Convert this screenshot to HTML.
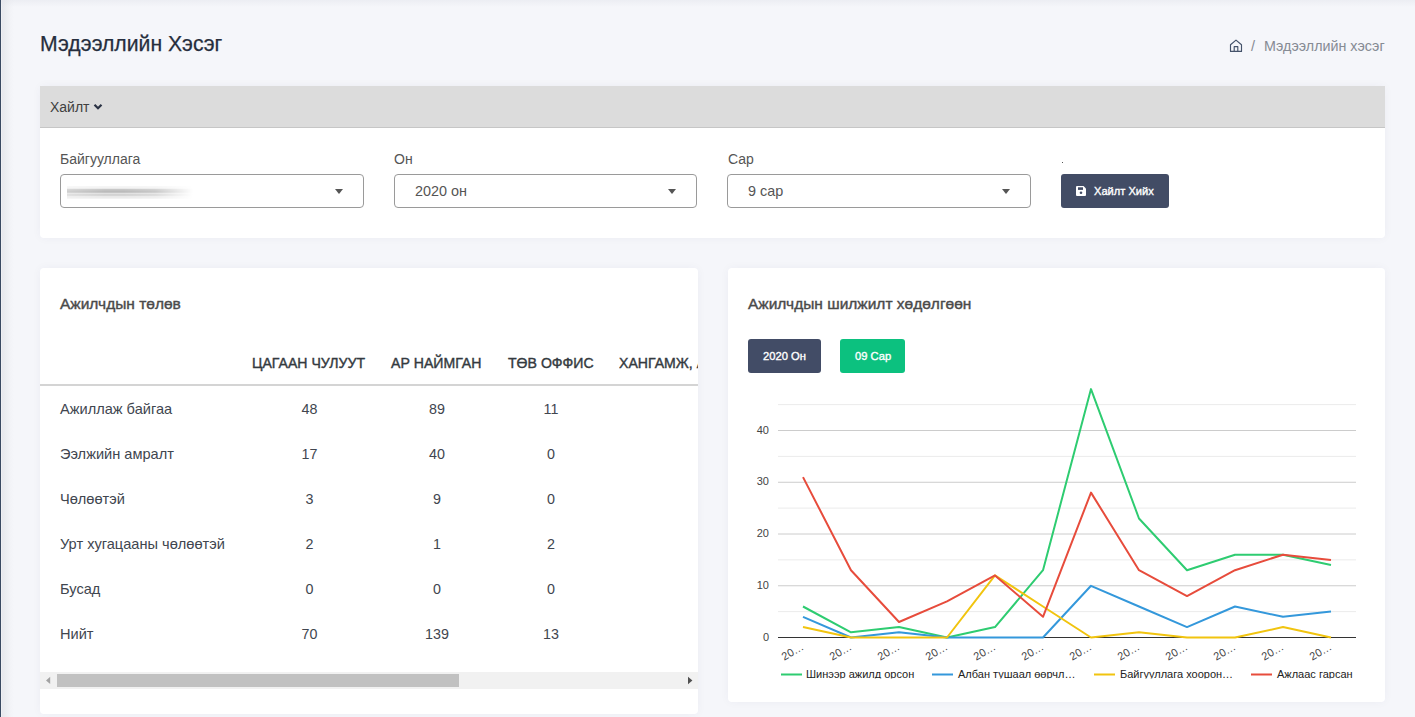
<!DOCTYPE html>
<html><head><meta charset="utf-8">
<style>
*{box-sizing:border-box;margin:0;padding:0}
html,body{width:1415px;height:717px;overflow:hidden}
body{background:#f5f6fa;font-family:"Liberation Sans",sans-serif;color:#343a40;position:relative}
.abs{position:absolute}
#topsh{left:1px;top:0;width:1414px;height:7px;background:linear-gradient(rgba(225,227,234,.45),rgba(245,246,250,0))}
#lb{left:0;top:0;width:1px;height:717px;background:#3a4b63}
#lsh{left:1px;top:0;width:13px;height:717px;background:linear-gradient(90deg,#f3f4f7 0,#e8e9ee 1.5px,#eceef2 5px,#f2f3f7 9px,#f5f6fa 13px)}
#title{left:40px;top:32px;font-size:21.2px;color:#262e3d;white-space:nowrap;-webkit-text-stroke:0.25px #262e3d}
#bc{left:1251px;top:38px;font-size:14.5px;color:#868b94;white-space:nowrap}
.card{background:#fff;border-radius:4px;box-shadow:0 0 10px rgba(40,50,90,0.045)}
#search{left:40px;top:86px;width:1345px;height:152px}
#shead{left:0;top:0;width:1345px;height:42px;background:#dcdcdc;border-bottom:1px solid #c6c6c6}
#shead span{position:absolute;left:10px;top:13px;font-size:14px;color:#404040}
.lbl{font-size:14px;color:#555;white-space:nowrap}
.sel{height:34px;border:1px solid #9a9a9a;border-radius:4px;background:#fff}
.sel .v{position:absolute;left:20px;top:8px;font-size:14.4px;color:#555;white-space:nowrap}
.sel .ar{position:absolute;width:0;height:0;border-left:4px solid transparent;border-right:4px solid transparent;border-top:5px solid #555;top:14px}
#btn{left:1061px;top:174px;width:108px;height:34px;background:#424c65;border-radius:3px;color:#fff}
#btn span{position:absolute;left:33px;top:11px;font-size:11.1px;white-space:nowrap;-webkit-text-stroke:0.35px #fff}
#lcard{left:40px;top:268px;width:658px;height:446px}
#rcard{left:728px;top:268px;width:657px;height:434px}
.ct{font-size:15.5px;color:#4a4a4a;white-space:nowrap;-webkit-text-stroke:0.4px #4a4a4a}
.th{font-size:14.1px;color:#343a40;white-space:nowrap;top:355px;-webkit-text-stroke:0.4px #343a40}
.rl{font-size:14.6px;color:#41464f;white-space:nowrap;left:60px}
.num{font-size:14.3px;color:#41464f;white-space:nowrap;text-align:center;width:60px}
.cb{top:339px;height:34px;border-radius:3px;color:#fff;font-size:11.2px}
.cb span{position:absolute;top:11px;white-space:nowrap;-webkit-text-stroke:0.35px #fff}
svg text{font-family:"Liberation Sans",sans-serif}
</style></head><body>
<div id="lsh" class="abs"></div>
<div id="topsh" class="abs"></div>
<div id="lb" class="abs"></div>
<div id="title" class="abs">Мэдээллийн Хэсэг</div>
<svg class="abs" style="left:1229px;top:39px" width="14" height="14" viewBox="0 0 14 14"><path d="M1.5 5.8 L7 1.1 L12.5 5.8 V12.4 H1.5 Z M5.2 12.4 V7.6 H8.8 V12.4" fill="none" stroke="#44526a" stroke-width="1.15" stroke-linejoin="round"/></svg>
<div id="bc" class="abs">/</div><div class="abs" style="left:1264px;top:38px;font-size:14.3px;color:#868b94;white-space:nowrap">Мэдээллийн хэсэг</div>

<div id="search" class="abs card">
  <div id="shead" class="abs"><span>Хайлт</span>
  <svg class="abs" style="left:53px;top:17px" width="10" height="8" viewBox="0 0 10 8"><path d="M1.5 1.8 L5 5.3 L8.5 1.8" fill="none" stroke="#2b3345" stroke-width="2.2"/></svg></div>
</div>
<div class="abs lbl" style="left:60px;top:151px">Байгууллага</div>
<div class="abs lbl" style="left:394px;top:151px">Он</div>
<div class="abs lbl" style="left:728px;top:151px">Сар</div>
<div class="abs" style="left:1062px;top:162px;width:1.3px;height:1.3px;background:#555"></div>
<div class="abs sel" style="left:60px;top:174px;width:304px">
  <div class="abs" style="left:6px;top:11px;width:126px;height:13px;background:linear-gradient(180deg,rgba(0,0,0,0) 0,rgba(0,0,0,.08) 1px,rgba(0,0,0,.02) 2px,rgba(0,0,0,.22) 3.5px,rgba(0,0,0,.28) 6px,rgba(0,0,0,.12) 7.5px,rgba(0,0,0,.2) 9px,rgba(0,0,0,.05) 11px,rgba(0,0,0,.1) 12px,rgba(0,0,0,0) 13px);-webkit-mask-image:linear-gradient(90deg,rgba(0,0,0,.7),#000 30%,#000 45%,rgba(0,0,0,.8) 70%,rgba(0,0,0,0))"></div>
  <div class="ar" style="left:274px"></div></div>
<div class="abs sel" style="left:394px;top:174px;width:303px"><div class="v">2020 он</div><div class="ar" style="left:273px"></div></div>
<div class="abs sel" style="left:727px;top:174px;width:304px"><div class="v">9 сар</div><div class="ar" style="left:274px"></div></div>
<div id="btn" class="abs">
  <svg class="abs" style="left:15px;top:12px" width="10" height="10" viewBox="0 0 10 10"><path d="M0 1 Q0 0 1 0 H7.5 L10 2.5 V9 Q10 10 9 10 H1 Q0 10 0 9 Z" fill="#fff"/><rect x="2" y="1.3" width="5" height="2.6" fill="#424c65"/><circle cx="5" cy="6.8" r="1.3" fill="#424c65"/></svg>
  <span>Хайлт Хийх</span></div>

<div id="lcard" class="abs card"></div>
<div class="abs ct" style="left:60px;top:295px">Ажилчдын төлөв</div>
<div class="abs th" style="left:252px">ЦАГААН ЧУЛУУТ</div>
<div class="abs th" style="left:391px">АР НАЙМГАН</div>
<div class="abs th" style="left:508px">ТӨВ ОФФИС</div>
<div class="abs" style="left:619px;top:355px;width:79px;height:20px;overflow:hidden"><div class="th" style="position:relative;top:0">ХАНГАМЖ, АЖ</div></div>
<div class="abs" style="left:40px;top:384px;width:658px;height:2px;background:#d4d4d4"></div>
<div class="abs rl" style="top:401px">Ажиллаж байгаа</div>
<div class="abs num" style="left:279.5px;top:401px">48</div>
<div class="abs num" style="left:407px;top:401px">89</div>
<div class="abs num" style="left:521px;top:401px">11</div>
<div class="abs rl" style="top:446px">Ээлжийн амралт</div>
<div class="abs num" style="left:279.5px;top:446px">17</div>
<div class="abs num" style="left:407px;top:446px">40</div>
<div class="abs num" style="left:521px;top:446px">0</div>
<div class="abs rl" style="top:491px">Чөлөөтэй</div>
<div class="abs num" style="left:279.5px;top:491px">3</div>
<div class="abs num" style="left:407px;top:491px">9</div>
<div class="abs num" style="left:521px;top:491px">0</div>
<div class="abs rl" style="top:536px">Урт хугацааны чөлөөтэй</div>
<div class="abs num" style="left:279.5px;top:536px">2</div>
<div class="abs num" style="left:407px;top:536px">1</div>
<div class="abs num" style="left:521px;top:536px">2</div>
<div class="abs rl" style="top:581px">Бусад</div>
<div class="abs num" style="left:279.5px;top:581px">0</div>
<div class="abs num" style="left:407px;top:581px">0</div>
<div class="abs num" style="left:521px;top:581px">0</div>
<div class="abs rl" style="top:626px">Нийт</div>
<div class="abs num" style="left:279.5px;top:626px">70</div>
<div class="abs num" style="left:407px;top:626px">139</div>
<div class="abs num" style="left:521px;top:626px">13</div>
<div class="abs" style="left:40px;top:672px;width:658px;height:17px;background:#f1f1f1"></div>
<div class="abs" style="left:57px;top:674px;width:402px;height:13px;background:#c1c1c1"></div>
<svg class="abs" style="left:0;top:0" width="1415" height="717"><path d="M50.2 676.8 V684 L46 680.4 Z" fill="#a3a3a3"/><path d="M688 676.8 V684.2 L692.4 680.5 Z" fill="#505050"/></svg>


<div id="rcard" class="abs card"></div>
<div class="abs ct" style="left:748px;top:295px">Ажилчдын шилжилт хөдөлгөөн</div>
<div class="abs cb" style="left:748px;width:73px;background:#424c66"><span style="left:15px">2020 Он</span></div>
<div class="abs cb" style="left:840px;width:65px;background:#0cc17f"><span style="left:15px">09 Сар</span></div>
<svg class="abs" style="left:0;top:0;overflow:visible" width="1415" height="717">
<defs><clipPath id="cl"><rect x="728" y="380" width="657" height="298.5"/></clipPath></defs>
<g clip-path="url(#cl)">
<line x1="778" x2="1356" y1="611.62" y2="611.62" stroke="#ebebeb" stroke-width="1"/>
<line x1="778" x2="1356" y1="559.88" y2="559.88" stroke="#ebebeb" stroke-width="1"/>
<line x1="778" x2="1356" y1="508.12" y2="508.12" stroke="#ebebeb" stroke-width="1"/>
<line x1="778" x2="1356" y1="456.38" y2="456.38" stroke="#ebebeb" stroke-width="1"/>
<line x1="778" x2="1356" y1="404.62" y2="404.62" stroke="#ebebeb" stroke-width="1"/>
<line x1="778" x2="1356" y1="585.75" y2="585.75" stroke="#cccccc" stroke-width="1"/>
<line x1="778" x2="1356" y1="534.00" y2="534.00" stroke="#cccccc" stroke-width="1"/>
<line x1="778" x2="1356" y1="482.25" y2="482.25" stroke="#cccccc" stroke-width="1"/>
<line x1="778" x2="1356" y1="430.50" y2="430.50" stroke="#cccccc" stroke-width="1"/>
<line x1="778" x2="1356" y1="637.5" y2="637.5" stroke="#333333" stroke-width="1.2"/>
<text x="769" y="640.70" text-anchor="end" font-size="11" fill="#444">0</text>
<text x="769" y="588.95" text-anchor="end" font-size="11" fill="#444">10</text>
<text x="769" y="537.20" text-anchor="end" font-size="11" fill="#444">20</text>
<text x="769" y="485.45" text-anchor="end" font-size="11" fill="#444">30</text>
<text x="769" y="433.70" text-anchor="end" font-size="11" fill="#444">40</text>
<polyline points="803,606.5 851,632.3 899,627.1 947,637.5 995,627.1 1043,570.2 1091,389.1 1139,518.5 1187,570.2 1235,554.7 1283,554.7 1331,565.0" fill="none" stroke="#2ecc71" stroke-width="2" stroke-linejoin="round"/>
<polyline points="803,616.8 851,637.5 899,632.3 947,637.5 995,637.5 1043,637.5 1091,585.8 1139,606.5 1187,627.1 1235,606.5 1283,616.8 1331,611.6" fill="none" stroke="#3498db" stroke-width="2" stroke-linejoin="round"/>
<polyline points="803,627.1 851,637.5 899,637.5 947,637.5 995,575.4 1043,606.5 1091,637.5 1139,632.3 1187,637.5 1235,637.5 1283,627.1 1331,637.5" fill="none" stroke="#f1c40f" stroke-width="2" stroke-linejoin="round"/>
<polyline points="803,477.1 851,570.2 899,622.0 947,601.3 995,575.4 1043,616.8 1091,492.6 1139,570.2 1187,596.1 1235,570.2 1283,554.7 1331,559.9" fill="none" stroke="#e74c3c" stroke-width="2" stroke-linejoin="round"/>
<text transform="translate(804.5,649.0) rotate(-30)" text-anchor="end" font-size="11" fill="#444">20…</text>
<text transform="translate(852.5,649.0) rotate(-30)" text-anchor="end" font-size="11" fill="#444">20…</text>
<text transform="translate(900.5,649.0) rotate(-30)" text-anchor="end" font-size="11" fill="#444">20…</text>
<text transform="translate(948.5,649.0) rotate(-30)" text-anchor="end" font-size="11" fill="#444">20…</text>
<text transform="translate(996.5,649.0) rotate(-30)" text-anchor="end" font-size="11" fill="#444">20…</text>
<text transform="translate(1044.5,649.0) rotate(-30)" text-anchor="end" font-size="11" fill="#444">20…</text>
<text transform="translate(1092.5,649.0) rotate(-30)" text-anchor="end" font-size="11" fill="#444">20…</text>
<text transform="translate(1140.5,649.0) rotate(-30)" text-anchor="end" font-size="11" fill="#444">20…</text>
<text transform="translate(1188.5,649.0) rotate(-30)" text-anchor="end" font-size="11" fill="#444">20…</text>
<text transform="translate(1236.5,649.0) rotate(-30)" text-anchor="end" font-size="11" fill="#444">20…</text>
<text transform="translate(1284.5,649.0) rotate(-30)" text-anchor="end" font-size="11" fill="#444">20…</text>
<text transform="translate(1332.5,649.0) rotate(-30)" text-anchor="end" font-size="11" fill="#444">20…</text>
<line x1="781" x2="802" y1="674.5" y2="674.5" stroke="#2ecc71" stroke-width="2"/>
<text x="806" y="678" font-size="11" fill="#222">Шинээр ажилд орсон</text>
<line x1="932" x2="953" y1="674.5" y2="674.5" stroke="#3498db" stroke-width="2"/>
<text x="958" y="678" font-size="11" fill="#222">Албан тушаал өөрчл…</text>
<line x1="1094" x2="1115" y1="674.5" y2="674.5" stroke="#f1c40f" stroke-width="2"/>
<text x="1120" y="678" font-size="11" fill="#222">Байгууллага хоорон…</text>
<line x1="1251" x2="1272" y1="674.5" y2="674.5" stroke="#e74c3c" stroke-width="2"/>
<text x="1277" y="678" font-size="11" fill="#222">Ажлаас гарсан</text>
</g>
</svg>
</body></html>
